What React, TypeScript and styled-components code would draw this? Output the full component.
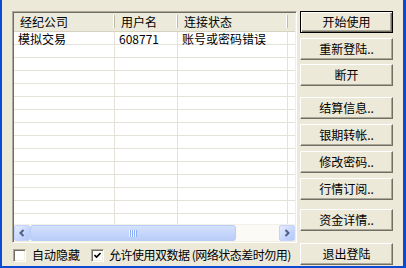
import React from "react";
import styled, { createGlobalStyle } from "styled-components";

const GlobalStyle = createGlobalStyle`
  html, body { margin: 0; padding: 0; background: #ECE9D8; }
  body {
    font-family: "Noto Sans CJK SC", "Noto Sans", "DejaVu Sans", sans-serif;
    font-size: 12px;
    color: #000;
  }
`;

const FONT = `"Noto Sans CJK SC", "Noto Sans", "DejaVu Sans", sans-serif`;

const Window = styled.div`
  box-sizing: border-box;
  width: 406px;
  height: 268px;
  background: #ECE9D8;
  border-left: 2px solid #0B4BD4;
  border-right: 3px solid #0B4BD4;
  border-bottom: 2px solid #0B4BD4;
  padding: 11px 10px 0 10px;
  display: grid;
  grid-template-columns: 285px 93px;
  column-gap: 3px;
  font-family: ${FONT};
  font-size: 12px;
`;

const LeftColumn = styled.div`
  display: flex;
  flex-direction: column;
`;

const ListView = styled.div`
  box-sizing: border-box;
  width: 285px;
  height: 232px;
  background: #fff;
  border: 1px solid;
  border-color: #ACA899 #fff #fff #ACA899;
  box-shadow: inset 1px 1px #716F64, inset -1px -1px #F1EFE2;
  padding: 1px;
  display: flex;
  flex-direction: column;
  overflow: hidden;
`;

const Header = styled.div`
  display: flex;
  height: 19px;
  flex: none;
  background: #EBEADB;
  border-bottom: 1px solid #D6D2C2;
  box-sizing: border-box;
`;

const HeaderCell = styled.div<{ $w: number; $last?: boolean }>`
  position: relative;
  width: ${(p) => p.$w}px;
  flex: ${(p) => (p.$last ? "1" : "none")};
  box-sizing: border-box;
  padding-left: 6px;
  line-height: 18px;
  white-space: nowrap;
  &::after {
    content: "";
    display: ${(p) => (p.$last ? "none" : "block")};
    position: absolute;
    right: 0;
    top: 2px;
    bottom: 3px;
    width: 1px;
    background: #BDBAA6;
    box-shadow: -1px 0 #fff;
  }
`;

const Rows = styled.div`
  flex: 1;
  min-height: 0;
  background-color: #fff;
  background-image: repeating-linear-gradient(
    to bottom,
    transparent 0,
    transparent 12px,
    #E4E2D9 12px,
    #E4E2D9 13px
  );
`;

const Row = styled.div`
  display: flex;
  height: 13px;
`;

const Cell = styled.div<{ $w: number; $last?: boolean }>`
  width: ${(p) => p.$w}px;
  flex: ${(p) => (p.$last ? "1" : "none")};
  box-sizing: border-box;
  border-right: ${(p) => (p.$last ? "none" : "1px solid #E4E2D9")};
  padding-left: 4px;
  line-height: 13px;
  white-space: nowrap;
`;

const ScrollBar = styled.div`
  flex: none;
  height: 16px;
  display: flex;
  background: #FBFAF6;
  border-top: 1px solid #F3F1EA;
`;

const ScrollButton = styled.div`
  width: 16px;
  height: 16px;
  box-sizing: border-box;
  border: 1px solid #C3D3FD;
  border-radius: 2px;
  background: linear-gradient(135deg, #E4ECFE 0%, #C5D5FB 60%, #B4C8F6 100%);
  display: flex;
  align-items: center;
  justify-content: center;
`;

const Track = styled.div`
  flex: 1;
  display: flex;
  padding-right: 43px;
`;

const Thumb = styled.div`
  flex: 1;
  height: 16px;
  box-sizing: border-box;
  border: 1px solid #B6CBF6;
  border-radius: 3px;
  background: linear-gradient(180deg, #D5E2FC 0%, #C6D6FB 50%, #BACDF8 100%);
  display: flex;
  align-items: center;
  justify-content: center;
`;

const OptionsRow = styled.div`
  display: flex;
  align-items: center;
  height: 14px;
  margin-top: 5px;
  padding-left: 1px;
  white-space: nowrap;
`;

const Check = styled.span<{ $gap: number }>`
  display: inline-flex;
  align-items: center;
  justify-content: center;
  width: 13px;
  height: 13px;
  box-sizing: border-box;
  background: #fff;
  border: 1px solid;
  border-color: #ACA899 #fff #fff #ACA899;
  box-shadow: inset 1px 1px #716F64, inset -1px -1px #F1EFE2;
  margin-right: ${(p) => p.$gap}px;
  flex: none;
`;

const Label = styled.span<{ $mr?: number; $tight?: boolean }>`
  line-height: 14px;
  margin-right: ${(p) => p.$mr ?? 0}px;
  letter-spacing: ${(p) => (p.$tight ? "-0.5px" : "0")};
`;

const ButtonColumn = styled.div`
  display: flex;
  flex-direction: column;
`;

const Button = styled.button<{ $mt: number; $default?: boolean }>`
  box-sizing: border-box;
  width: 93px;
  height: 22px;
  margin: ${(p) => p.$mt}px 0 0 0;
  padding: 0;
  background: #ECE9D8;
  font-family: ${FONT};
  font-size: 12px;
  color: #000;
  display: flex;
  align-items: center;
  justify-content: center;
  border: 1px solid;
  border-color: ${(p) => (p.$default ? "#000" : "#fff #716F64 #716F64 #fff")};
  box-shadow: ${(p) =>
    p.$default
      ? "inset 1px 1px #fff, inset -1px -1px #716F64, inset -2px -2px #ACA899"
      : "inset -1px -1px #ACA899"};
  line-height: 14px;
`;

const cols = [
  { w: 101, title: "经纪公司" },
  { w: 63, title: "用户名" },
  { w: 110, title: "连接状态" },
];

const rows: string[][] = [["模拟交易", "608771", "账号或密码错误"]];
for (let i = 0; i < 14; i++) rows.push(["", "", ""]);

const buttons = [
  { label: "开始使用", mt: 0, def: true },
  { label: "重新登陆..", mt: 5 },
  { label: "断开", mt: 4 },
  { label: "结算信息..", mt: 11 },
  { label: "银期转帐..", mt: 5 },
  { label: "修改密码..", mt: 5 },
  { label: "行情订阅..", mt: 5 },
  { label: "资金详情..", mt: 9 },
  { label: "退出登陆", mt: 12 },
];

const ArrowLeft = () => (
  <svg width="8" height="8" viewBox="0 0 8 8">
    <path d="M5.5 1 L2.5 4 L5.5 7" fill="none" stroke="#4D6185" strokeWidth="2" />
  </svg>
);
const ArrowRight = () => (
  <svg width="8" height="8" viewBox="0 0 8 8">
    <path d="M2.5 1 L5.5 4 L2.5 7" fill="none" stroke="#4D6185" strokeWidth="2" />
  </svg>
);
const Grip = () => (
  <svg width="8" height="7" viewBox="0 0 8 7">
    {[0, 2, 4, 6].map((x) => (
      <line key={x} x1={x + 0.5} y1="0" x2={x + 0.5} y2="7" stroke="#EEF4FE" strokeWidth="1" />
    ))}
    {[1, 3, 5, 7].map((x) => (
      <line key={x} x1={x + 0.5} y1="0" x2={x + 0.5} y2="7" stroke="#8CB0F8" strokeWidth="1" />
    ))}
  </svg>
);
const CheckMark = () => (
  <svg width="7" height="7" viewBox="0 0 7 7">
    <path d="M0.5 3 L2.5 5 L6.5 1" fill="none" stroke="#000" strokeWidth="1.6" />
  </svg>
);

export default function App() {
  return (
    <>
      <GlobalStyle />
      <Window>
        <LeftColumn>
          <ListView>
            <Header>
              {cols.map((c) => (
                <HeaderCell key={c.title} $w={c.w}>
                  {c.title}
                </HeaderCell>
              ))}
              <HeaderCell $w={7} $last />
            </Header>
            <Rows>
              {rows.map((r, i) => (
                <Row key={i}>
                  {r.map((v, j) => (
                    <Cell key={j} $w={cols[j].w}>
                      {v}
                    </Cell>
                  ))}
                  <Cell $w={7} $last />
                </Row>
              ))}
            </Rows>
            <ScrollBar>
              <ScrollButton>
                <ArrowLeft />
              </ScrollButton>
              <Track>
                <Thumb>
                  <Grip />
                </Thumb>
              </Track>
              <ScrollButton>
                <ArrowRight />
              </ScrollButton>
            </ScrollBar>
          </ListView>
          <OptionsRow>
            <Check $gap={6} />
            <Label $mr={11}>自动隐藏</Label>
            <Check $gap={5}>
              <CheckMark />
            </Check>
            <Label $tight>允许使用双数据 (网络状态差时勿用)</Label>
          </OptionsRow>
        </LeftColumn>
        <ButtonColumn>
          {buttons.map((b) => (
            <Button key={b.label} $mt={b.mt} $default={b.def}>
              {b.label}
            </Button>
          ))}
        </ButtonColumn>
      </Window>
    </>
  );
}
